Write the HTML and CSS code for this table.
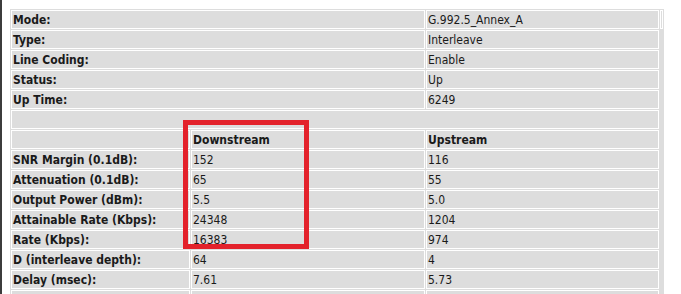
FILE: index.html
```html
<!DOCTYPE html>
<html>
<head>
<meta charset="utf-8">
<link rel="stylesheet" href="styles.css">
</head>
<body>
<div class="frame">
  <div class="stats">
    <div class="cell label span2">Mode:</div>
    <div class="cell">G.992.5_Annex_A</div>
    <div class="cell tiny"></div>

    <div class="cell label span2">Type:</div>
    <div class="cell">Interleave</div>
    <div class="gap"></div>

    <div class="cell label span2">Line Coding:</div>
    <div class="cell">Enable</div>
    <div class="gap"></div>

    <div class="cell label span2">Status:</div>
    <div class="cell">Up</div>
    <div class="gap"></div>

    <div class="cell label span2">Up Time:</div>
    <div class="cell">6249</div>
    <div class="gap"></div>

    <div class="cell span3"></div>
    <div class="gap"></div>

    <div class="cell"></div>
    <div class="cell label">Downstream</div>
    <div class="cell label">Upstream</div>
    <div class="gap"></div>

    <div class="cell label">SNR Margin (0.1dB):</div>
    <div class="cell">152</div>
    <div class="cell">116</div>
    <div class="gap"></div>

    <div class="cell label">Attenuation (0.1dB):</div>
    <div class="cell">65</div>
    <div class="cell">55</div>
    <div class="gap"></div>

    <div class="cell label">Output Power (dBm):</div>
    <div class="cell">5.5</div>
    <div class="cell">5.0</div>
    <div class="gap"></div>

    <div class="cell label">Attainable Rate (Kbps):</div>
    <div class="cell">24348</div>
    <div class="cell">1204</div>
    <div class="gap"></div>

    <div class="cell label">Rate (Kbps):</div>
    <div class="cell">16383</div>
    <div class="cell">974</div>
    <div class="gap"></div>

    <div class="cell label">D (interleave depth):</div>
    <div class="cell">64</div>
    <div class="cell">4</div>
    <div class="gap"></div>

    <div class="cell label">Delay (msec):</div>
    <div class="cell">7.61</div>
    <div class="cell">5.73</div>
    <div class="gap"></div>

    <div class="cell"></div>
    <div class="cell"></div>
    <div class="cell"></div>
    <div class="gap"></div>

    <div class="highlight"></div>
  </div>
</div>
</body>
</html>
```

FILE: styles.css
```css
html, body {
  margin: 0;
  padding: 0;
  background: #ffffff;
  overflow: hidden;
}

.frame {
  border-left: 2px solid #3c3c3c;
  padding: 9px 0 0 8px;
  min-height: 400px;
  box-sizing: border-box;
}

.stats {
  position: relative;
  display: grid;
  grid-template-columns: 179px 234px 233px 3px;
  grid-auto-rows: 19px;
  gap: 1px;
  padding: 1px;
  width: 654px;
  box-sizing: border-box;
  background: #dddddd;
  font-family: "DejaVu Sans Condensed", "DejaVu Sans", sans-serif;
  font-stretch: condensed;
  font-size: 12px;
  color: #1a1a1a;
}

.cell {
  box-sizing: border-box;
  border: 1px solid #ffffff;
  background: #dddddd;
  padding: 2px 1px 0;
  line-height: 15px;
  white-space: nowrap;
  overflow: hidden;
}

.label {
  font-weight: bold;
}

.span2 {
  grid-column: span 2;
}

.span3 {
  grid-column: span 3;
}

.tiny {
  padding: 0;
}

.gap {
  background: transparent;
}

.highlight {
  position: absolute;
  left: 173px;
  top: 111px;
  width: 126px;
  height: 129px;
  box-sizing: border-box;
  border: 5px solid #e3222b;
  pointer-events: none;
}
```
